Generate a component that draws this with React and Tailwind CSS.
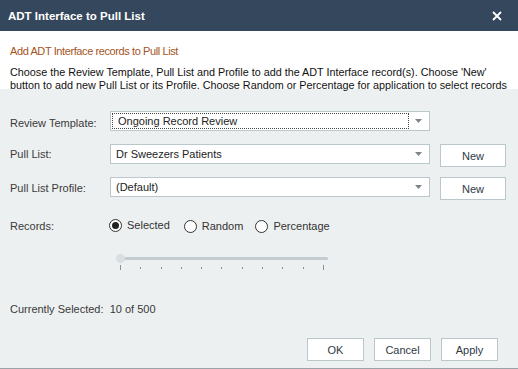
import React, { useState } from 'react';

const font = { fontFamily: '"Liberation Sans", Arial, sans-serif' };

const Combo = ({ value, focused }) => (
  <div className="w-[320px] h-[20px] shrink-0 bg-white border border-[#bcc7cb] flex items-center pr-[3px]">
    <div className={`flex-1 flex items-center pl-[5px] text-[11px] text-[#222] ${focused ? 'border border-dotted border-[#444] mx-[1px] h-[16px] pl-[4px]' : 'h-full'}`}>
      {value}
    </div>
    <div className="w-[16px] flex justify-center">
      <svg width="7" height="4" viewBox="0 0 7 4"><path d="M0 0h7L3.5 4z" fill="#7d8589" /></svg>
    </div>
  </div>
);

const Btn = ({ children, className = '' }) => (
  <button className={`h-[23px] bg-white border border-[#bcc7cb] text-[11px] text-[#2e3a46] flex items-center justify-center ${className}`}>
    {children}
  </button>
);

const Radio = ({ label, checked, onClick, className = '' }) => (
  <button onClick={onClick} className={`flex items-center gap-[5px] ${className}`}>
    <span className="w-[13px] h-[13px] rounded-full border border-[#333] bg-white flex items-center justify-center">
      {checked && <span className="w-[7px] h-[7px] rounded-full bg-[#222]" />}
    </span>
    <span className="text-[11px] text-[#333]">{label}</span>
  </button>
);

export default function App() {
  const [mode, setMode] = useState('Selected');
  const ticks = Array.from({ length: 11 });

  return (
    <div className="w-[518px] h-[369px] bg-[#edf0f1] flex flex-col border-b border-[#9aa3a8] overflow-hidden leading-[14px]" style={font}>
      {/* Title bar */}
      <div className="h-[31px] shrink-0 bg-[#35475c] flex items-center justify-between pl-[8px] pr-[16px]">
        <span className="text-white font-bold text-[11.5px]">ADT Interface to Pull List</span>
        <svg width="10" height="10" viewBox="0 0 10 10">
          <path d="M1 1l8 8M9 1l-8 8" stroke="#fff" strokeWidth="1.8" />
        </svg>
      </div>

      {/* Header */}
      <div className="h-[58px] shrink-0 bg-white px-[10px] pt-[14px] leading-[13px] whitespace-nowrap">
        <div className="text-[#a4541e] text-[11px] tracking-[-0.4px] mb-[8px]">Add ADT Interface records to Pull List</div>
        <div className="text-[#111] text-[10.8px]">
          Choose the Review Template, Pull List and Profile to add the ADT Interface record(s). Choose 'New'<br />
          button to add new Pull List or its Profile. Choose Random or Percentage for application to select records
        </div>
      </div>

      {/* Form */}
      <div className="flex-1 flex flex-col px-[10px] pt-[22px] text-[11px] text-[#3a3a3a]">
        <div className="flex items-start h-[20px]">
          <span className="w-[100px] leading-[20px] pt-[2px]">Review Template:</span>
          <Combo value="Ongoing Record Review" focused />
        </div>
        <div className="flex items-start h-[23px] mt-[13px]">
          <span className="w-[100px] leading-[20px]">Pull List:</span>
          <Combo value="Dr Sweezers Patients" />
          <Btn className="ml-[10px] w-[66px]">New</Btn>
        </div>
        <div className="flex items-start h-[23px] mt-[10px]">
          <span className="w-[100px] leading-[20px] pt-[1px]">Pull List Profile:</span>
          <Combo value="(Default)" />
          <Btn className="ml-[10px] w-[66px]">New</Btn>
        </div>

        <div className="flex items-center mt-[18px] h-[16px]">
          <span className="w-[99px]">Records:</span>
          <Radio label="Selected" checked={mode === 'Selected'} onClick={() => setMode('Selected')} className="-mt-[2px]" />
          <Radio label="Random" checked={mode === 'Random'} onClick={() => setMode('Random')} className="ml-[14px]" />
          <Radio label="Percentage" checked={mode === 'Percentage'} onClick={() => setMode('Percentage')} className="ml-[12px]" />
        </div>

        {/* Slider */}
        <div className="ml-[106px] mt-[20px] w-[212px] flex flex-col">
          <div className="relative h-[9px] flex items-center">
            <div className="ml-[4px] flex-1 h-[3px] bg-[#c3ccd0] rounded-full" />
            <div className="absolute left-0 w-[9px] h-[9px] rounded-full bg-[#d8dfe2]" />
          </div>
          <div className="flex justify-between px-[4px] mt-[2px] h-[6px]">
            {ticks.map((_, i) => (
              <span key={i} className={`w-px bg-[#8a9296] ${i === 0 || i === 10 ? 'h-[5px]' : 'h-[2px] mt-[2px]'}`} />
            ))}
          </div>
        </div>

        <div className="mt-[31px]">Currently Selected:&nbsp; 10 of 500</div>

        <div className="flex justify-end gap-[10px] mt-[22px] pr-[10px]">
          <Btn className="w-[57px]">OK</Btn>
          <Btn className="w-[57px]">Cancel</Btn>
          <Btn className="w-[57px]">Apply</Btn>
        </div>
      </div>
    </div>
  );
}
